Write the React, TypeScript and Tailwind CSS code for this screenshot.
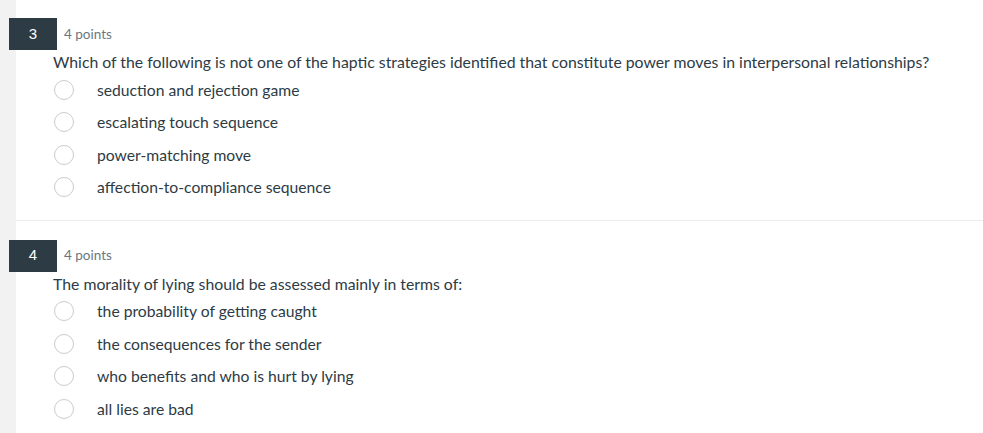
const questions = [
  {
    num: "3",
    points: "4 points",
    text: "Which of the following is not one of the haptic strategies identified that constitute power moves in interpersonal relationships?",
    options: [
      "seduction and rejection game",
      "escalating touch sequence",
      "power-matching move",
      "affection-to-compliance sequence",
    ],
  },
  {
    num: "4",
    points: "4 points",
    text: "The morality of lying should be assessed mainly in terms of:",
    options: [
      "the probability of getting caught",
      "the consequences for the sender",
      "who benefits and who is hurt by lying",
      "all lies are bad",
    ],
  },
];

function Question({ q, last }: { q: (typeof questions)[number]; last: boolean }) {
  return (
    <div className={last ? "pt-[19px]" : "pt-[18px] pb-4 border-b border-[#ececec]"}>
      <div className="flex items-center">
        <div className="-ml-[7px] flex h-8 w-12 items-center justify-center bg-[#2d3b45] text-[15px] text-white [font-family:'Liberation_Sans',Arial,sans-serif]">
          {q.num}
        </div>
        <span className="ml-[7px] text-[13.5px] text-[#6b7780]">{q.points}</span>
      </div>
      <div className="ml-[37px] mt-[2px] text-[15.8px] leading-5 text-[#2d3b45]">{q.text}</div>
      <div className="ml-[38px] mt-[1.5px] flex flex-col">
        {q.options.map((o) => (
          <label key={o} className="flex h-[32.5px] items-center">
            <span className="h-5 w-5 shrink-0 rounded-full border border-[#c7cdd1] bg-white" />
            <span className="ml-[23px] text-[15.7px] leading-5 text-[#2d3b45]">{o}</span>
          </label>
        ))}
      </div>
    </div>
  );
}

export default function App() {
  return (
    <div className="flex h-[433px] w-full overflow-hidden bg-white [font-family:Lato,'Noto_Sans',sans-serif]">
      <div className="w-4 shrink-0 bg-[#f2f2f2]" />
      <div className="flex-1">
        {questions.map((q, i) => (
          <Question key={q.num} q={q} last={i === questions.length - 1} />
        ))}
      </div>
    </div>
  );
}
